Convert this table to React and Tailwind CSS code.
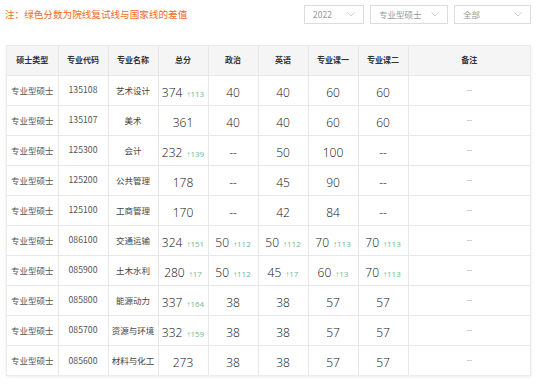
import { useState } from "react";

const rows = [
  ["135108", "艺术设计", ["374", "113"], ["40"], ["40"], ["60"], ["60"]],
  ["135107", "美术", ["361"], ["40"], ["40"], ["60"], ["60"]],
  ["125300", "会计", ["232", "139"], ["--"], ["50"], ["100"], ["--"]],
  ["125200", "公共管理", ["178"], ["--"], ["45"], ["90"], ["--"]],
  ["125100", "工商管理", ["170"], ["--"], ["42"], ["84"], ["--"]],
  ["086100", "交通运输", ["324", "151"], ["50", "112"], ["50", "112"], ["70", "113"], ["70", "113"]],
  ["085900", "土木水利", ["280", "17"], ["50", "112"], ["45", "17"], ["60", "13"], ["70", "113"]],
  ["085800", "能源动力", ["337", "164"], ["38"], ["38"], ["57"], ["57"]],
  ["085700", "资源与环境", ["332", "159"], ["38"], ["38"], ["57"], ["57"]],
  ["085600", "材料与化工", ["273"], ["38"], ["38"], ["57"], ["57"]],
];

const heads = ["硕士类型", "专业代码", "专业名称", "总分", "政治", "英语", "专业课一", "专业课二", "备注"];

function Select({ value, width }) {
  return (
    <div
      className={`flex h-[19px] items-center justify-between border border-[#dcdcdc] bg-white pl-[8px] pr-[8px] text-[8.5px] text-[#999] ${width}`}
    >
      <span>{value}</span>
      <svg width="8" height="5" viewBox="0 0 8 5" fill="none">
        <path d="M0.5 0.5l3.5 3.5L7.5 0.5" stroke="#c8c8c8" strokeWidth="0.9" />
      </svg>
    </div>
  );
}

function Score({ v }) {
  return (
    <span className="whitespace-nowrap font-['Open_Sans',sans-serif]">
      <span className="text-[12px] font-light text-[#111]">{v[0]}</span>
      {v[1] && <span className="ml-[4px] text-[8px] text-[#6cb996]">↑{v[1]}</span>}
    </span>
  );
}

export default function App() {
  const [data] = useState(rows);

  return (
    <div
      className="h-[384px] w-[537px] overflow-hidden bg-white"
      style={{ fontFamily: '"Noto Sans CJK SC", "Noto Sans", sans-serif' }}
    >
      <div className="flex h-[27px] items-center justify-between pl-[5px] pr-[6px] pt-[1px]">
        <div className="text-[9.6px] text-[#f26b1d]">注：绿色分数为院线复试线与国家线的差值</div>
        <div className="flex gap-[6px]">
          <Select value="2022" width="w-[60px]" />
          <Select value="专业型硕士" width="w-[78px]" />
          <Select value="全部" width="w-[77px]" />
        </div>
      </div>

      <div className="ml-[6px] mt-[18px] w-[525px] border border-[#ebebeb] shadow-[0_1px_3px_rgba(0,0,0,0.08)]">
        <table className="w-full table-fixed border-collapse">
          <colgroup>
            <col className="w-[51px]" />
            <col className="w-[50px]" />
            <col className="w-[50px]" />
            <col className="w-[50px]" />
            <col className="w-[50px]" />
            <col className="w-[50px]" />
            <col className="w-[50px]" />
            <col className="w-[50px]" />
            <col />
          </colgroup>
          <thead>
            <tr className="h-[29px] bg-[#f5f5f5]">
              {heads.map((h, i) => (
                <th
                  key={h}
                  className={`text-center text-[8px] font-bold text-[#333] ${i < 8 ? "border-r border-[#e6e6e6]" : ""}`}
                >
                  {h}
                </th>
              ))}
            </tr>
          </thead>
          <tbody>
            {data.map((r, idx) => (
              <tr key={idx} className="h-[30px] border-t border-[#e8e8e8]">
                <td className="border-r border-[#e8e8e8] text-center text-[8.5px] text-[#555]">专业型硕士</td>
                <td className="border-r border-[#e8e8e8] text-center text-[8.7px] text-[#555]">{r[0]}</td>
                <td className="border-r border-[#e8e8e8] text-center text-[8.5px] text-[#444]">{r[1]}</td>
                {r.slice(2).map((v, j) => (
                  <td key={j} className="border-r border-[#e8e8e8] text-center">
                    <Score v={v} />
                  </td>
                ))}
                <td className="text-center text-[8px] text-[#999]">--</td>
              </tr>
            ))}
          </tbody>
        </table>
      </div>
    </div>
  );
}
